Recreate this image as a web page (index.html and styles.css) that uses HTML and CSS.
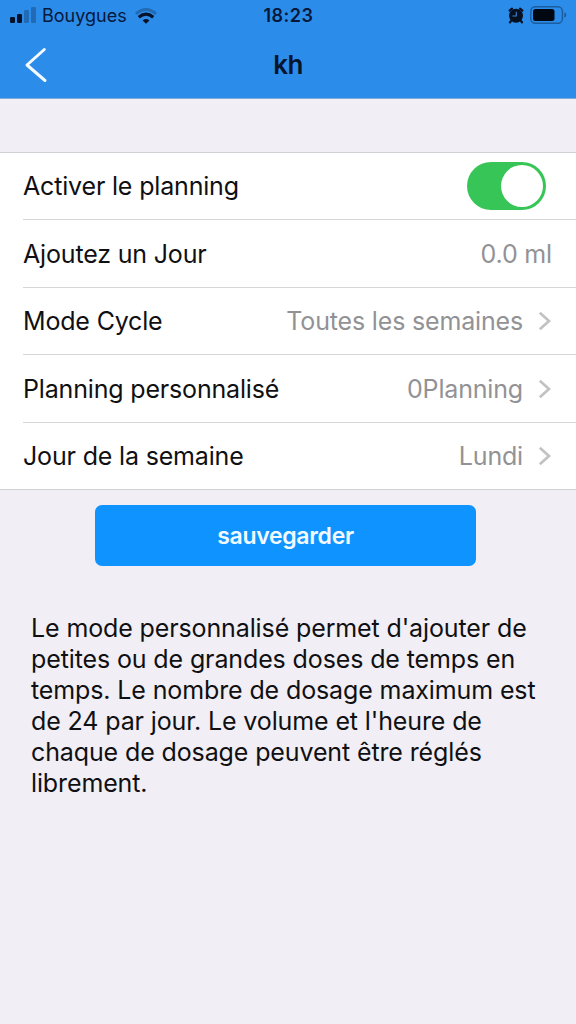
FILE: index.html
```html
<!DOCTYPE html>
<html lang="fr">
<head>
<meta charset="utf-8">
<title>kh</title>
<link rel="stylesheet" href="styles.css">
</head>
<body>
<header class="header">
  <div class="status">
    <div class="status-left">
      <svg class="signal" width="26" height="16" viewBox="0 0 26 16">
        <rect x="0" y="10" width="5" height="6" rx="1.2" fill="#06122a"/>
        <rect x="7" y="7" width="5" height="9" rx="1.2" fill="#06122a"/>
        <rect x="14" y="3" width="5" height="13" rx="1.2" fill="#216bb6"/>
        <rect x="21" y="0" width="5" height="16" rx="1.2" fill="#216bb6"/>
      </svg>
      <span class="carrier">Bouygues</span>
      <svg class="wifi" width="22" height="16" viewBox="0 0 22 16" fill="none">
        <path d="M1 5.8Q11-2.8 21 5.8" stroke="#216bb6" stroke-width="3"/>
        <path d="M3.8 9.2Q11 3.2 18.2 9.2" stroke="#06122a" stroke-width="3.2"/>
        <path d="M11 15.7L7.6 12.4Q11 9.8 14.4 12.4Z" fill="#06122a"/>
      </svg>
    </div>
    <span class="clock">18:23</span>
    <div class="status-right">
      <svg width="16" height="17" viewBox="0 0 16 17">
        <circle cx="8" cy="8.7" r="7" fill="#06101f"/>
        <path d="M1.6 3.6L4 1.6M14.4 3.6L12 1.6M3.3 13.5L2 15.4M12.7 13.5L14 15.4" stroke="#06101f" stroke-width="2.2" stroke-linecap="round"/>
        <path d="M8.3 4.7V9H4.5" fill="none" stroke="#3d87d6" stroke-width="1.1"/>
      </svg>
      <svg width="37" height="18" viewBox="0 0 37 18">
        <rect x=".8" y=".8" width="31.6" height="16.4" rx="4.5" fill="none" stroke="#1a5c9e" stroke-width="1.4"/>
        <rect x="3" y="3" width="21.5" height="12" rx="2.5" fill="#020812"/>
        <path d="M34.3 6.3Q36.3 7 36.3 9T34.3 11.7Z" fill="#1a5c9e"/>
      </svg>
    </div>
  </div>
  <div class="navbar">
    <svg class="back" width="24" height="36" viewBox="0 0 24 36">
      <path d="M20.3 2.5L3 18L21 33.5" fill="none" stroke="#f4faff" stroke-width="3" stroke-linecap="round" stroke-linejoin="round"/>
    </svg>
    <h1 class="title">kh</h1>
  </div>
</header>
<main>
  <section class="list">
    <div class="row"><span class="label">Activer le planning</span><span class="toggle"><span class="knob"></span></span></div>
    <div class="row"><span class="label">Ajoutez un Jour</span><span class="value">0.0 ml</span></div>
    <div class="row"><span class="label">Mode Cycle</span><span class="value">Toutes les semaines</span><svg class="chevron" width="13" height="20" viewBox="0 0 13 20"><path d="M1.8 1.8L11 10L1.8 18.2"/></svg></div>
    <div class="row"><span class="label">Planning personnalisé</span><span class="value">0Planning</span><svg class="chevron" width="13" height="20" viewBox="0 0 13 20"><path d="M1.8 1.8L11 10L1.8 18.2"/></svg></div>
    <div class="row"><span class="label">Jour de la semaine</span><span class="value">Lundi</span><svg class="chevron" width="13" height="20" viewBox="0 0 13 20"><path d="M1.8 1.8L11 10L1.8 18.2"/></svg></div>
  </section>
  <button class="save">sauvegarder</button>
  <p class="note">Le mode personnalisé permet d'ajouter de<br>petites ou de grandes doses de temps en<br>temps. Le nombre de dosage maximum est<br>de 24 par jour. Le volume et l'heure de<br>chaque de dosage peuvent être réglés<br>librement.</p>
</main>
</body>
</html>
```
FILE: styles.css
```css
* { box-sizing: border-box; }
body {
  margin: 0;
  min-height: 1024px;
  background: #f1eef5;
  font-family: Inter, "Liberation Sans", sans-serif;
  color: #101012;
}
.header {
  height: 99px;
  background: #2b8cea;
  border-bottom: 1px solid #86a9d4;
}
.status {
  height: 31px;
  display: grid;
  grid-template-columns: 1fr auto 1fr;
  align-items: center;
  padding: 0 9px 0 10px;
  color: #06183a;
}
.status-left, .status-right { display: flex; align-items: center; }
.status-right { justify-content: flex-end; gap: 6px; padding-bottom: 1px; }
.signal { margin: -1px 6px 0 0; }
.wifi { margin-left: 8px; }
.carrier { font-size: 18px; letter-spacing: 0; }
.clock { font-size: 18px; font-weight: 600; letter-spacing: 0.5px; }
.navbar {
  height: 67px;
  display: grid;
  grid-template-columns: 1fr auto 1fr;
  align-items: center;
  padding: 0 24px;
}
.title {
  margin: 0;
  font-size: 26px;
  line-height: 32px;
  font-weight: 600;
  letter-spacing: -0.6px;
  color: #06142c;
}
.list {
  margin-top: 53px;
  background: #fff;
  border-top: 1px solid #d0cfd4;
  border-bottom: 1px solid #d0cfd4;
}
.row {
  height: 67.5px;
  margin-left: 23px;
  padding-right: 24px;
  display: flex;
  align-items: center;
  justify-content: space-between;
  font-size: 25px;
  letter-spacing: -0.17px;
}
.row:first-child { height: 66px; }
.row + .row { border-top: 1px solid #d6d6d9; padding-top: 1px; }
.label { flex: 1; }
.value { color: #929295; }
.chevron { margin: 0 1px 0 15px; }
.chevron path {
  fill: none;
  stroke: #c2c2c5;
  stroke-width: 2.7;
}
.toggle {
  width: 79px;
  height: 48px;
  margin-right: 6px;
  padding: 3px;
  border-radius: 24px;
  background: #38c558;
  display: flex;
  justify-content: flex-end;
}
.knob {
  width: 42px;
  height: 42px;
  border-radius: 50%;
  background: #fff;
}
.save {
  display: block;
  width: 381px;
  height: 61px;
  margin: 15px 0 0 95px;
  padding: 1px 0 0;
  border: 0;
  border-radius: 7px;
  background: #0f94ff;
  color: #f2faff;
  font: 600 23px Inter, "Liberation Sans", sans-serif;
  letter-spacing: -0.3px;
}
.note {
  margin: 47px 0 0 31px;
  font-size: 25px;
  line-height: 31px;
  letter-spacing: -0.12px;
  white-space: nowrap;
}
```
